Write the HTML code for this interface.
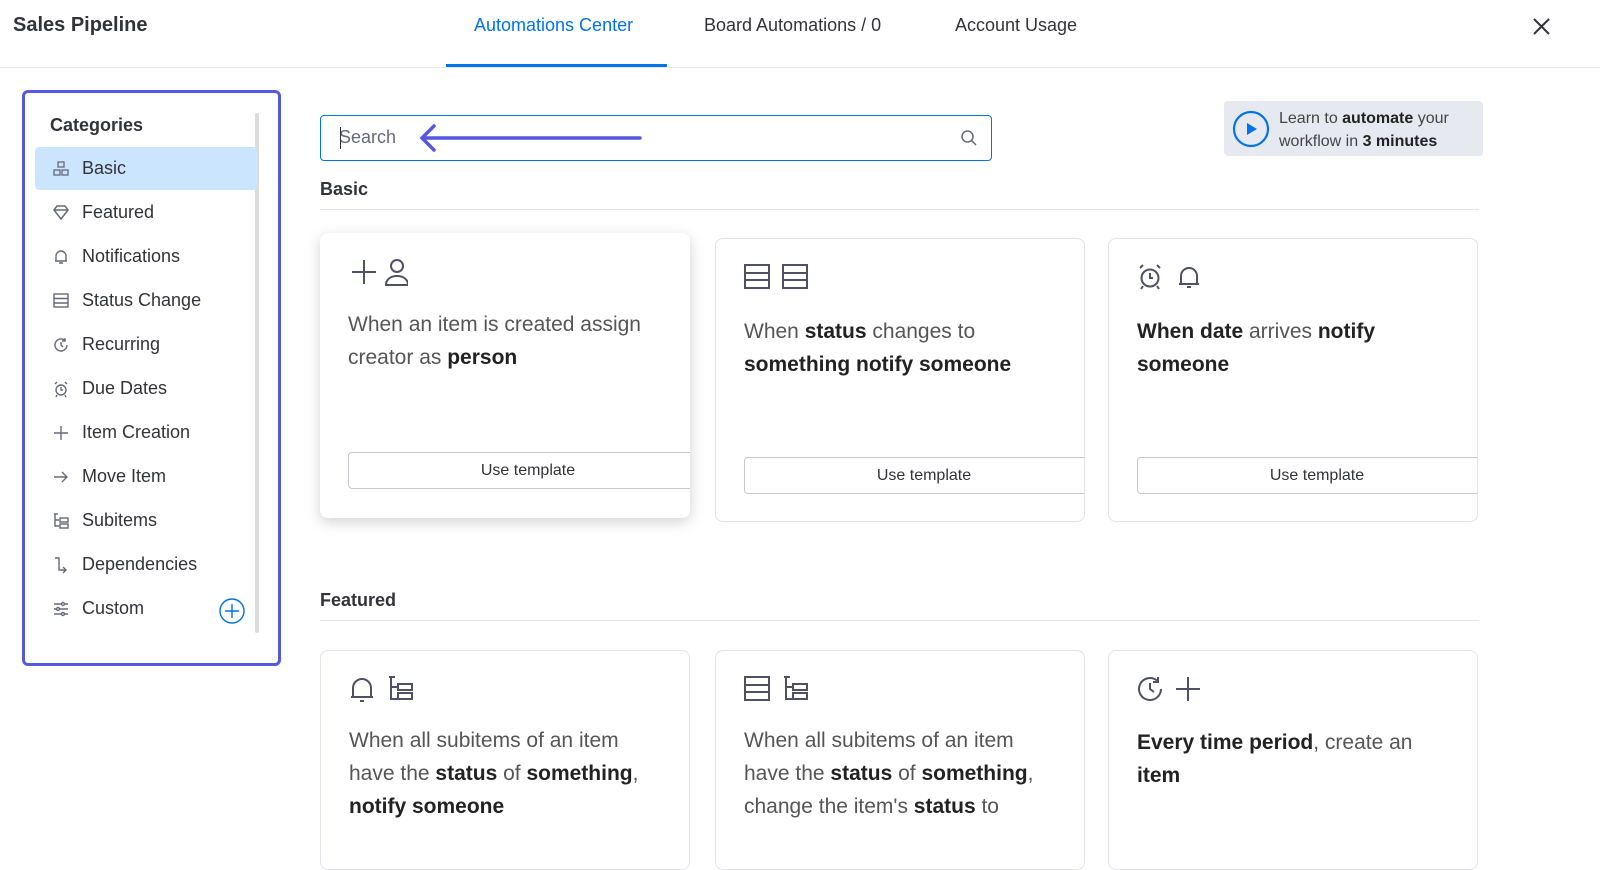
<!DOCTYPE html>
<html><head><meta charset="utf-8"><style>
*{box-sizing:border-box;margin:0;padding:0}
body{width:1600px;height:837px;overflow:hidden;background:#fff;font-family:"Liberation Sans",sans-serif;color:#323338;position:relative}
.abs{position:absolute}
.tab{position:absolute;top:15px;font-size:18px;color:#323338}
.side{position:absolute;left:22px;top:90px;width:259px;height:576px;border:3px solid #5559df;border-radius:6px}
.item{position:absolute;left:10px;width:222px;height:43px;border-radius:4px;font-size:18px;color:#323338}
.item span{position:absolute;left:47px;top:11px}
.item svg{position:absolute;left:17px;top:13px}
.card{position:absolute;width:370px;border:1px solid #e3e4ea;border-radius:8px;background:#fff;overflow:hidden}
.card .txt{position:absolute;left:28px;top:74px;font-size:21px;line-height:33px;color:#555;width:320px}
.card b{color:#222;font-weight:700}
.btn{position:absolute;left:28px;width:360px;height:37px;border:1px solid #c5c7d0;border-radius:4px;font-size:16px;text-align:center;line-height:35px;color:#323338}
.ic{position:absolute;left:28px;top:24px}
.sec{position:absolute;left:320px;width:1159px;font-size:18px;font-weight:bold;border-bottom:1px solid #e3e4ea;padding-bottom:9px}
</style></head><body>
<div class="abs" style="left:13px;top:14px;font-size:20px;font-weight:bold">Sales Pipeline</div>
<div class="tab" style="left:474px;color:#0073ea">Automations Center</div>
<div class="abs" style="left:446px;top:64px;width:221px;height:3px;background:#0073ea"></div>
<div class="tab" style="left:704px">Board Automations / 0</div>
<div class="tab" style="left:955px">Account Usage</div>
<svg class="abs" style="left:1532px;top:17px" width="19" height="19" viewBox="0 0 19 19"><path d="M2 2L17 17M17 2L2 17" stroke="#323338" stroke-width="2"/></svg>
<div class="abs" style="left:0;top:67px;width:1600px;height:1px;background:#e6e9ef"></div>

<div class="side">
<div class="abs" style="left:25px;top:22px;font-size:18px;font-weight:bold">Categories</div>
<div class="abs" style="left:230px;top:20px;width:4px;height:520px;background:#dcdcdc;border-radius:2px"></div>
<div class="item" style="top:54px;background:#cce5ff"><svg width="18" height="18" viewBox="0 0 18 18" fill="none" stroke="#676879" stroke-width="1.3"><rect x="6" y="2" width="6" height="5"/><rect x="2" y="10" width="6" height="5"/><rect x="10" y="10" width="6" height="5"/></svg><span>Basic</span></div>
<div class="item" style="top:98px"><svg width="18" height="18" viewBox="0 0 18 18" fill="none" stroke="#676879" stroke-width="1.5"><path d="M2 6L5 2H13L16 6L9 15Z M2 6H16"/></svg><span>Featured</span></div>
<div class="item" style="top:142px"><svg width="18" height="18" viewBox="0 0 18 18" fill="none" stroke="#676879" stroke-width="1.4"><path d="M4 13V8a5 5 0 0110 0v5H3h12M7 15h4"/></svg><span>Notifications</span></div>
<div class="item" style="top:186px"><svg width="18" height="18" viewBox="0 0 18 18" fill="none" stroke="#676879" stroke-width="1.4"><rect x="2" y="2" width="14" height="13"/><path d="M2 6.5H16M2 11H16"/></svg><span>Status Change</span></div>
<div class="item" style="top:230px"><svg width="18" height="18" viewBox="0 0 18 18" fill="none" stroke="#676879" stroke-width="1.4"><path d="M15 9a6 6 0 11-2-4.5M13 2v3h-3M9 6v3l2 2"/></svg><span>Recurring</span></div>
<div class="item" style="top:274px"><svg width="18" height="18" viewBox="0 0 18 18" fill="none" stroke="#676879" stroke-width="1.4"><circle cx="9" cy="10" r="5"/><path d="M9 7v3h2M3 4l2-2M15 4l-2-2M5 15l-1 2M13 15l1 2"/></svg><span>Due Dates</span></div>
<div class="item" style="top:318px"><svg width="18" height="18" viewBox="0 0 18 18" fill="none" stroke="#676879" stroke-width="1.4"><path d="M9 2v14M2 9h14"/></svg><span>Item Creation</span></div>
<div class="item" style="top:362px"><svg width="18" height="18" viewBox="0 0 18 18" fill="none" stroke="#676879" stroke-width="1.4"><path d="M2 9h13M10 4l5 5-5 5"/></svg><span>Move Item</span></div>
<div class="item" style="top:406px"><svg width="18" height="18" viewBox="0 0 18 18" fill="none" stroke="#676879" stroke-width="1.4"><path d="M3 2v12h4M3 8h4"/><rect x="8" y="6" width="8" height="4"/><rect x="8" y="12" width="8" height="4"/><path d="M2 2h4"/></svg><span>Subitems</span></div>
<div class="item" style="top:450px"><svg width="18" height="18" viewBox="0 0 18 18" fill="none" stroke="#676879" stroke-width="1.4"><path d="M3 2h4v12h7M11 11l3 3-3 3"/></svg><span>Dependencies</span></div>
<div class="item" style="top:494px"><svg width="18" height="18" viewBox="0 0 18 18" fill="none" stroke="#676879" stroke-width="1.4"><path d="M2 4h14M2 9h14M2 14h14"/><circle cx="11" cy="4" r="1.5" fill="#fff"/><circle cx="6" cy="9" r="1.5" fill="#fff"/><circle cx="11" cy="14" r="1.5" fill="#fff"/></svg><span>Custom</span></div>
<svg class="abs" style="left:194px;top:505px" width="26" height="26" viewBox="0 0 26 26" fill="none" stroke="#0073ea" stroke-width="1.4"><circle cx="13" cy="13" r="12"/><path d="M13 6v14M6 13h14"/></svg>
</div>

<div class="abs" style="left:320px;top:115px;width:672px;height:46px;border:1.5px solid #0073ea;border-radius:4px"></div>
<div class="abs" style="left:339px;top:127px;font-size:18px;color:#676879">Search</div>
<div class="abs" style="left:340px;top:127px;width:1px;height:22px;background:#323338"></div>
<svg class="abs" style="left:418px;top:122px" width="226" height="32" viewBox="0 0 226 32" fill="none" stroke="#5559df" stroke-width="3.5" stroke-linecap="round"><path d="M4 16H222M16 4L4 16L16 28"/></svg>
<svg class="abs" style="left:960px;top:129px" width="18" height="18" viewBox="0 0 18 18" fill="none" stroke="#676879" stroke-width="1.5"><circle cx="7.5" cy="7.5" r="5.5"/><path d="M11.5 11.5L16 16"/></svg>

<div class="abs" style="left:1224px;top:101px;width:259px;height:55px;background:#e6e9ef;border-radius:4px"></div>
<svg class="abs" style="left:1232px;top:110px" width="38" height="38" viewBox="0 0 38 38"><circle cx="19" cy="19" r="17" fill="none" stroke="#0073ea" stroke-width="2.2"/><path d="M15 13L25 19L15 25Z" fill="#0073ea"/></svg>
<div class="abs" style="left:1279px;top:107px;font-size:16px;line-height:23px;color:#444">Learn to <b style="color:#222">automate</b> your<br>workflow in <b style="color:#222">3 minutes</b></div>

<div class="sec" style="top:179px">Basic</div>

<div class="card" style="left:320px;top:233px;height:285px;border:none;box-shadow:0 4px 14px rgba(0,0,0,0.18)">
<svg class="ic" width="60" height="30" viewBox="0 0 60 30" fill="none" stroke="#4f5066" stroke-width="2"><path d="M16 3v24M4 15h24"/><circle cx="49" cy="9" r="6"/><path d="M38 28c0-6 5-9 11-9s11 3 11 9z"/></svg>
<div class="txt" style="top:75px">When an item is created assign creator as <b>person</b></div>
<div class="btn" style="top:219px">Use template</div>
</div>
<div class="card" style="left:715px;top:238px;height:284px">
<svg class="ic" width="66" height="28" viewBox="0 0 66 28" fill="none" stroke="#4f5066" stroke-width="2"><rect x="1" y="2" width="24" height="23"/><path d="M1 10h24M1 17h24"/><rect x="39" y="2" width="24" height="23"/><path d="M39 10h24M39 17h24"/></svg>
<div class="txt" style="top:76px">When <b>status</b> changes to <b>something notify someone</b></div>
<div class="btn" style="top:218px">Use template</div>
</div>
<div class="card" style="left:1108px;top:238px;height:284px">
<svg class="ic" width="66" height="28" viewBox="0 0 66 28" fill="none" stroke="#4f5066" stroke-width="2"><circle cx="13" cy="15" r="8.5"/><path d="M13 10v5h3M3 5l3-3M23 5l-3-3M6 23l-2 3M20 23l2 3M44 21v-8a8 8 0 0116 0v8H42h20M50 24h4"/></svg>
<div class="txt" style="top:76px"><b>When date</b> arrives <b>notify someone</b></div>
<div class="btn" style="top:218px">Use template</div>
</div>

<div class="sec" style="top:590px">Featured</div>

<div class="card" style="left:320px;top:650px;height:220px">
<svg class="ic" width="66" height="28" viewBox="0 0 66 28" fill="none" stroke="#4f5066" stroke-width="2"><path d="M4 22v-9a9 9 0 0118 0v9H2h22M11 26h4M42 2v22h6M42 12h6"/><rect x="49" y="9" width="14" height="6"/><rect x="49" y="18" width="14" height="6"/><path d="M40 2h6"/></svg>
<div class="txt" style="top:73px">When all subitems of an item have the <b>status</b> of <b>something</b>, <b>notify someone</b></div>
</div>
<div class="card" style="left:715px;top:650px;height:220px">
<svg class="ic" width="66" height="28" viewBox="0 0 66 28" fill="none" stroke="#4f5066" stroke-width="2"><rect x="1" y="2" width="24" height="23"/><path d="M1 10h24M1 17h24M42 2v22h6M42 12h6"/><rect x="49" y="9" width="14" height="6"/><rect x="49" y="18" width="14" height="6"/><path d="M40 2h6"/></svg>
<div class="txt" style="top:73px">When all subitems of an item have the <b>status</b> of <b>something</b>, change the item's <b>status</b> to</div>
</div>
<div class="card" style="left:1108px;top:650px;height:220px">
<svg class="ic" width="66" height="28" viewBox="0 0 66 28" fill="none" stroke="#4f5066" stroke-width="2"><path d="M24 14a11 11 0 11-4-8.5M21 2v5h-5M13 8v6l4 3M51 2v24M39 14h24"/></svg>
<div class="txt" style="top:75px"><b>Every time period</b>, create an <b>item</b></div>
</div>
</body></html>
